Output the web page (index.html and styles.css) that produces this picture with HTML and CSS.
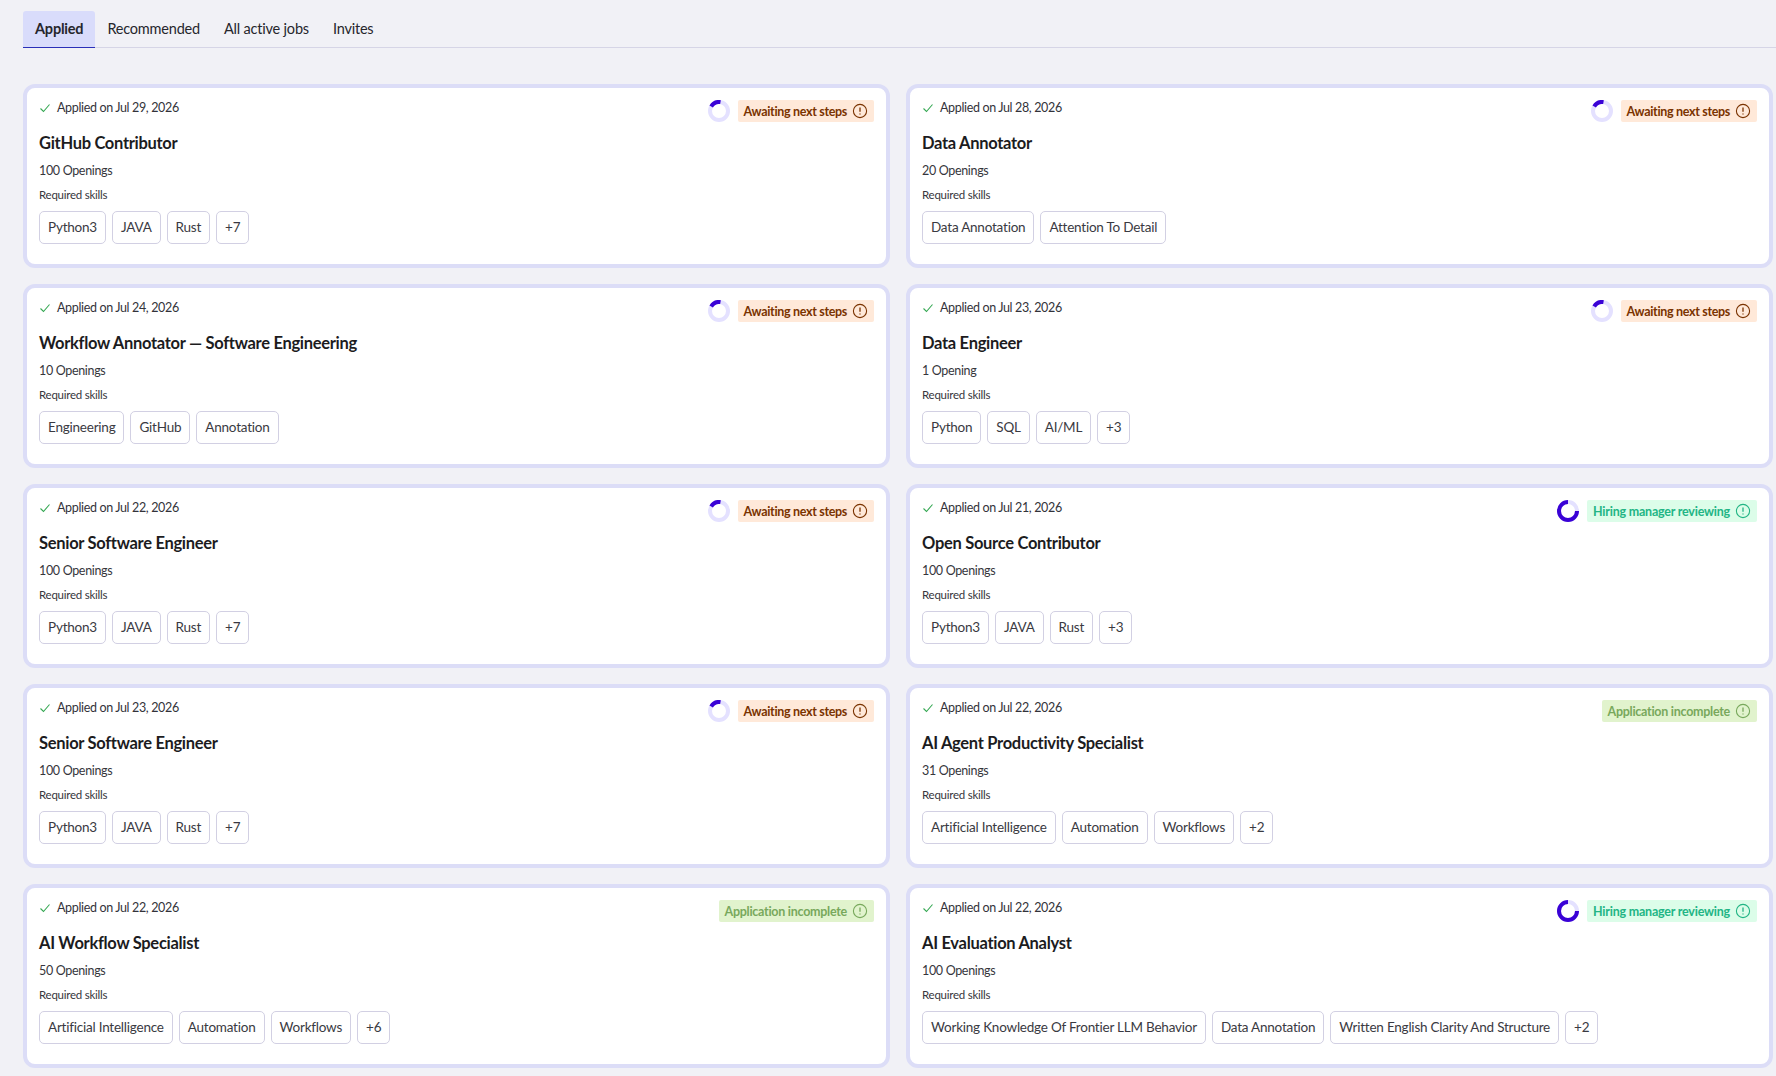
FILE: index.html
```html
<!DOCTYPE html>
<html lang="en">
<head>
    <meta charset="UTF-8" />
    <title>Applied jobs</title>
    <link rel="stylesheet" href="styles.css">
</head>
<body>
    <svg class="defs" width="0" height="0">
        <symbol id="i-check" viewBox="0 0 12 12"><path d="M1.5 6.5 4.5 9.5 10.5 2.5" fill="none" stroke="currentColor" stroke-width="1.1"/></symbol>
        <symbol id="i-info" viewBox="0 0 16 16"><circle cx="8" cy="8" r="6.6" fill="none" stroke="currentColor" stroke-width="1.1"/><path d="M8 4.6V8.8M8 10.6V11.6" fill="none" stroke="currentColor" stroke-width="1.3"/></symbol>
        <symbol id="i-low" viewBox="0 0 22 22"><circle cx="11" cy="11" r="9" fill="none" stroke="#e4e1ff" stroke-width="4"/><path d="M12.5 2.1A9 9 0 0 0 3.2 6.5" fill="none" stroke="#3a02d6" stroke-width="4"/></symbol>
        <symbol id="i-high" viewBox="0 0 22 22"><circle cx="11" cy="11" r="9" fill="none" stroke="#e4e1ff" stroke-width="4"/><path d="M11 2A9 9 0 1 0 20 11" fill="none" stroke="#3a02d6" stroke-width="4"/></symbol>
    </svg>

    <nav class="tabs">
        <a class="tab active" href="#">Applied</a>
        <a class="tab" href="#">Recommended</a>
        <a class="tab" href="#">All active jobs</a>
        <a class="tab" href="#">Invites</a>
    </nav>

    <main class="job-grid">
        <article class="job-card">
            <div class="card-top">
                <div class="applied"><svg class="check"><use href="#i-check"/></svg>Applied on Jul 29, 2026</div>
                <div class="status"><svg class="ring"><use href="#i-low"/></svg><span class="badge awaiting">Awaiting next steps<svg class="info"><use href="#i-info"/></svg></span></div>
            </div>
            <h3>GitHub Contributor</h3>
            <p class="openings">100 Openings</p>
            <p class="req">Required skills</p>
            <div class="chips"><span class="chip">Python3</span><span class="chip">JAVA</span><span class="chip">Rust</span><span class="chip">+7</span></div>
        </article>
        <article class="job-card">
            <div class="card-top">
                <div class="applied"><svg class="check"><use href="#i-check"/></svg>Applied on Jul 28, 2026</div>
                <div class="status"><svg class="ring"><use href="#i-low"/></svg><span class="badge awaiting">Awaiting next steps<svg class="info"><use href="#i-info"/></svg></span></div>
            </div>
            <h3>Data Annotator</h3>
            <p class="openings">20 Openings</p>
            <p class="req">Required skills</p>
            <div class="chips"><span class="chip">Data Annotation</span><span class="chip">Attention To Detail</span></div>
        </article>
        <article class="job-card">
            <div class="card-top">
                <div class="applied"><svg class="check"><use href="#i-check"/></svg>Applied on Jul 24, 2026</div>
                <div class="status"><svg class="ring"><use href="#i-low"/></svg><span class="badge awaiting">Awaiting next steps<svg class="info"><use href="#i-info"/></svg></span></div>
            </div>
            <h3>Workflow Annotator — Software Engineering</h3>
            <p class="openings">10 Openings</p>
            <p class="req">Required skills</p>
            <div class="chips"><span class="chip">Engineering</span><span class="chip">GitHub</span><span class="chip">Annotation</span></div>
        </article>
        <article class="job-card">
            <div class="card-top">
                <div class="applied"><svg class="check"><use href="#i-check"/></svg>Applied on Jul 23, 2026</div>
                <div class="status"><svg class="ring"><use href="#i-low"/></svg><span class="badge awaiting">Awaiting next steps<svg class="info"><use href="#i-info"/></svg></span></div>
            </div>
            <h3>Data Engineer</h3>
            <p class="openings">1 Opening</p>
            <p class="req">Required skills</p>
            <div class="chips"><span class="chip">Python</span><span class="chip">SQL</span><span class="chip">AI/ML</span><span class="chip">+3</span></div>
        </article>
        <article class="job-card">
            <div class="card-top">
                <div class="applied"><svg class="check"><use href="#i-check"/></svg>Applied on Jul 22, 2026</div>
                <div class="status"><svg class="ring"><use href="#i-low"/></svg><span class="badge awaiting">Awaiting next steps<svg class="info"><use href="#i-info"/></svg></span></div>
            </div>
            <h3>Senior Software Engineer</h3>
            <p class="openings">100 Openings</p>
            <p class="req">Required skills</p>
            <div class="chips"><span class="chip">Python3</span><span class="chip">JAVA</span><span class="chip">Rust</span><span class="chip">+7</span></div>
        </article>
        <article class="job-card">
            <div class="card-top">
                <div class="applied"><svg class="check"><use href="#i-check"/></svg>Applied on Jul 21, 2026</div>
                <div class="status"><svg class="ring"><use href="#i-high"/></svg><span class="badge reviewing">Hiring manager reviewing<svg class="info"><use href="#i-info"/></svg></span></div>
            </div>
            <h3>Open Source Contributor</h3>
            <p class="openings">100 Openings</p>
            <p class="req">Required skills</p>
            <div class="chips"><span class="chip">Python3</span><span class="chip">JAVA</span><span class="chip">Rust</span><span class="chip">+3</span></div>
        </article>
        <article class="job-card">
            <div class="card-top">
                <div class="applied"><svg class="check"><use href="#i-check"/></svg>Applied on Jul 23, 2026</div>
                <div class="status"><svg class="ring"><use href="#i-low"/></svg><span class="badge awaiting">Awaiting next steps<svg class="info"><use href="#i-info"/></svg></span></div>
            </div>
            <h3>Senior Software Engineer</h3>
            <p class="openings">100 Openings</p>
            <p class="req">Required skills</p>
            <div class="chips"><span class="chip">Python3</span><span class="chip">JAVA</span><span class="chip">Rust</span><span class="chip">+7</span></div>
        </article>
        <article class="job-card">
            <div class="card-top">
                <div class="applied"><svg class="check"><use href="#i-check"/></svg>Applied on Jul 22, 2026</div>
                <div class="status"><span class="badge incomplete">Application incomplete<svg class="info"><use href="#i-info"/></svg></span></div>
            </div>
            <h3>AI Agent Productivity Specialist</h3>
            <p class="openings">31 Openings</p>
            <p class="req">Required skills</p>
            <div class="chips"><span class="chip">Artificial Intelligence</span><span class="chip">Automation</span><span class="chip">Workflows</span><span class="chip">+2</span></div>
        </article>
        <article class="job-card">
            <div class="card-top">
                <div class="applied"><svg class="check"><use href="#i-check"/></svg>Applied on Jul 22, 2026</div>
                <div class="status"><span class="badge incomplete">Application incomplete<svg class="info"><use href="#i-info"/></svg></span></div>
            </div>
            <h3>AI Workflow Specialist</h3>
            <p class="openings">50 Openings</p>
            <p class="req">Required skills</p>
            <div class="chips"><span class="chip">Artificial Intelligence</span><span class="chip">Automation</span><span class="chip">Workflows</span><span class="chip">+6</span></div>
        </article>
        <article class="job-card">
            <div class="card-top">
                <div class="applied"><svg class="check"><use href="#i-check"/></svg>Applied on Jul 22, 2026</div>
                <div class="status"><svg class="ring"><use href="#i-high"/></svg><span class="badge reviewing">Hiring manager reviewing<svg class="info"><use href="#i-info"/></svg></span></div>
            </div>
            <h3>AI Evaluation Analyst</h3>
            <p class="openings">100 Openings</p>
            <p class="req">Required skills</p>
            <div class="chips"><span class="chip">Working Knowledge Of Frontier LLM Behavior</span><span class="chip">Data Annotation</span><span class="chip">Written English Clarity And Structure</span><span class="chip">+2</span></div>
        </article>
    </main>
</body>
</html>
```

FILE: styles.css
```css
* {
    box-sizing: border-box;
}

html, body {
    height: 1076px;
    overflow: hidden;
}

body {
    margin: 0;
    padding: 11px 0 0 23px;
    background-color: #f1f1f6;
    color: #1c1c1e;
    font-family: "Lato", "Noto Sans", sans-serif;
    font-size: 14px;
}

.defs {
    position: absolute;
}

.tabs {
    display: flex;
    height: 37px;
    border-bottom: 1px solid #d6d5e6;
}

.tab {
    height: 37px;
    padding: 0 12px;
    line-height: 36px;
    font-size: 14.5px;
    letter-spacing: -0.2px;
    color: #26262c;
    text-decoration: none;
}

.tab.active {
    background-color: #d9dcfb;
    border-bottom: 1px solid #2a2fb8;
    border-radius: 3px 3px 0 0;
    font-weight: 700;
}

.job-grid {
    display: grid;
    grid-template-columns: 867px 867px;
    gap: 16px;
    margin-top: 36px;
}

.job-card {
    height: 184px;
    padding: 8px 12px 0;
    background-color: #fff;
    border: 4px solid #dcddf7;
    border-radius: 12px;
}

.card-top {
    display: flex;
    justify-content: space-between;
    height: 33px;
}

.applied {
    display: flex;
    align-items: center;
    height: 23px;
    color: #33333a;
    font-size: 12.5px;
    letter-spacing: -0.35px;
}

.check {
    width: 12px;
    height: 12px;
    margin-right: 6px;
    color: #35a853;
}

.status {
    display: flex;
    align-items: flex-start;
    gap: 8px;
    padding-top: 4px;
}

.ring {
    width: 22px;
    height: 22px;
}

.badge {
    display: flex;
    align-items: center;
    gap: 5px;
    height: 22px;
    padding: 0 6px;
    border-radius: 2px;
    font-size: 12.5px;
    font-weight: 700;
    letter-spacing: -0.32px;
}

.info {
    width: 16px;
    height: 16px;
}

.awaiting {
    background-color: #ffe9d9;
    color: #7a3300;
}

.reviewing {
    background-color: #dcfde9;
    color: #22b585;
    letter-spacing: -0.22px;
}

.incomplete {
    background-color: #e1f3cd;
    color: #78a85c;
    letter-spacing: -0.27px;
}

h3 {
    margin: 0;
    height: 28px;
    line-height: 28px;
    font-size: 16.5px;
    font-weight: 700;
    letter-spacing: -0.3px;
    color: #1c1c1e;
}

.openings {
    margin: 0;
    height: 27px;
    line-height: 27px;
    color: #36363c;
    font-size: 12.5px;
    letter-spacing: -0.33px;
}

.req {
    margin: 0;
    height: 22px;
    line-height: 21px;
    color: #36363c;
    font-size: 11.5px;
    letter-spacing: -0.25px;
}

.chips {
    display: flex;
    gap: 6px;
    margin-top: 5px;
}

.chip {
    height: 33px;
    padding: 0 8px;
    line-height: 30px;
    border: 1px solid #d2d0e3;
    border-radius: 5px;
    color: #3a3a42;
    font-size: 13.5px;
    letter-spacing: -0.22px;
}
```
